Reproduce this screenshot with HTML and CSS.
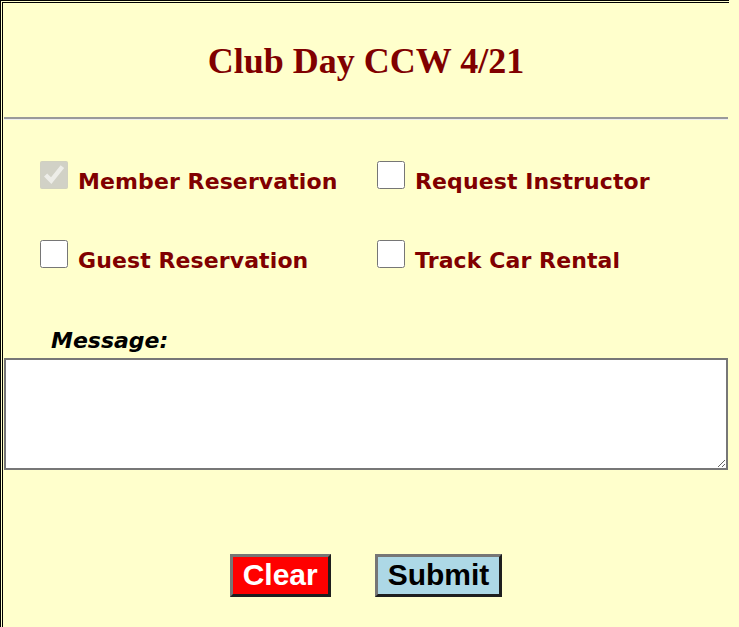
FILE: index.html
```html
<!DOCTYPE html>
<html lang="en">
<head>
    <meta charset="UTF-8">
    <title>Club Day CCW 4/21</title>
    <link rel="stylesheet" href="styles.css">
</head>
<body>
    <form class="page">
        <h1 class="title">Club Day CCW 4/21</h1>
        <hr>
        <div class="options">
            <label class="option"><input type="checkbox" checked disabled>Member Reservation</label>
            <label class="option"><input type="checkbox">Request Instructor</label>
            <label class="option"><input type="checkbox">Guest Reservation</label>
            <label class="option"><input type="checkbox">Track Car Rental</label>
        </div>
        <label class="msg-label" for="message">Message:</label>
        <textarea id="message"></textarea>
        <div class="actions">
            <button type="reset" class="btn btn-clear">Clear</button>
            <button type="button" class="btn btn-submit">Submit</button>
        </div>
    </form>
</body>
</html>
```

FILE: styles.css
```css
body {
    margin: 0;
    background-color: #ffffcc;
    overflow: hidden;
}

.page {
    width: 724px;
    padding: 0 1px;
    border-top: 3px double #000;
    border-left: 3px double #000;
    min-height: 640px;
}

.title {
    margin: 37px 0 35px;
    font-family: "Liberation Serif", serif;
    font-size: 36px;
    font-weight: bold;
    color: #800000;
    text-align: center;
}

hr {
    height: 0;
    margin: 0;
    border: none;
    border-top: 2px solid #9a9a9a;
    border-bottom: 1px solid #eeeeee;
}

.options {
    display: grid;
    grid-template-columns: 337px 1fr;
    row-gap: 46px;
    padding-left: 36px;
    margin-top: 41px;
}

.option {
    font-family: "DejaVu Sans", Verdana, sans-serif;
    font-size: 22px;
    font-weight: bold;
    letter-spacing: 0.1px;
    color: #800000;
}

.option input {
    width: 28px;
    height: 28px;
    margin: 0 10px 0 0;
    vertical-align: baseline;
}

.msg-label {
    display: block;
    margin-top: 55px;
    padding-left: 47px;
    font-family: "DejaVu Sans", Verdana, sans-serif;
    font-size: 22px;
    font-weight: bold;
    font-style: italic;
    color: #000;
}

textarea {
    display: block;
    box-sizing: border-box;
    width: 724px;
    height: 112px;
    margin-top: 5px;
    border: 2px solid #777;
    background: #fff;
}

.actions {
    display: flex;
    justify-content: center;
    gap: 44px;
    margin-top: 84px;
}

.btn {
    font-family: "Liberation Sans", Arial, sans-serif;
    font-size: 30px;
    font-weight: bold;
    padding: 1px 10px 2px;
    border: 3px solid;
    border-color: #767676 #1e1e1e #1e1e1e #767676;
    border-radius: 0;
}

.btn-clear {
    background-color: #ff0000;
    color: #fff;
}

.btn-submit {
    background-color: #add8e6;
    color: #000;
}
```
